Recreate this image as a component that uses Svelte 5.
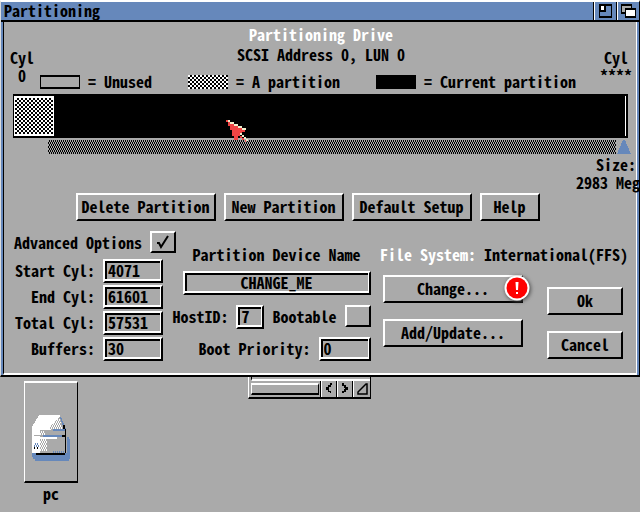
<script>
  const fields = [
    { id: 'start', label: 'Start Cyl:', value: '4071' },
    { id: 'end', label: 'End Cyl:', value: '61601' },
    { id: 'total', label: 'Total Cyl:', value: '57531' },
    { id: 'buffers', label: 'Buffers:', value: '30' }
  ];
  const actions = ['Delete Partition', 'New Partition', 'Default Setup', 'Help'];
  const legend = [
    { kind: 'unused', text: '= Unused' },
    { kind: 'used', text: '= A partition' },
    { kind: 'current', text: '= Current partition' }
  ];
  let advanced = $state(true);
  let bootable = $state(false);
</script>

<main class="screen">
  <section class="window">
    <header class="titlebar">
      <h1>Partitioning</h1>
      <button class="gadget" aria-label="Zoom window">
        <svg width="22" height="18" shape-rendering="crispEdges">
          <path d="M4 2H17V16H4Z" fill="#000" /><path d="M5 4H16V14H5Z" fill="#6688bb" />
          <path d="M5 4H11V10H5Z" fill="#000" /><path d="M6 4H9V8H6Z" fill="#fff" />
        </svg>
      </button>
      <button class="gadget" aria-label="Window to back">
        <svg width="21" height="18" shape-rendering="crispEdges">
          <path d="M3 2H14V12H3Z" fill="#000" /><path d="M4 4H13V10H4Z" fill="#aaa" />
          <path d="M7 6H18V16H7Z" fill="#000" /><path d="M8 8H17V14H8Z" fill="#fff" />
        </svg>
      </button>
    </header>

    <div class="panel">
      <div class="top">
        <p class="cyl">Cyl<br />0</p>
        <div class="middle">
          <h2>Partitioning Drive</h2>
          <p>SCSI Address 0, LUN 0</p>
          <ul class="legend">
            {#each legend as item}
              <li><span class="swatch {item.kind}"></span><span class="text">{item.text}</span></li>
            {/each}
          </ul>
        </div>
        <p class="cyl">Cyl<br />****</p>
      </div>

      <div class="drive"><span class="part"></span><span class="edge"></span></div>
      <div class="slider">
        <span class="track"></span>
        <svg width="14" height="14" shape-rendering="crispEdges"><path d="M6 0H8L14 14H0Z" fill="#6688bb" /></svg>
      </div>
      <p class="size">Size:<br /><span>2983 Meg</span></p>

      <div class="actions">
        {#each actions as action}<button class="btn">{action}</button>{/each}
      </div>

      <div class="form">
        <div class="left">
          <div class="line advanced">
            <label for="advanced">Advanced Options</label>
            <span class="check">
              <input id="advanced" type="checkbox" bind:checked={advanced} />
              {#if advanced}
                <svg width="14" height="14" viewBox="0 0 14 14"><path d="M1 8H3L5 12L12 1" fill="none" stroke="#000" stroke-width="2" /></svg>
              {/if}
            </span>
          </div>
          {#each fields as f}
            <div class="line field">
              <label for={f.id}>{f.label}</label>
              <input class="box" id={f.id} type="text" value={f.value} />
            </div>
          {/each}
        </div>

        <div class="center">
          <label class="name" for="device">Partition Device Name</label>
          <input class="box device" id="device" type="text" value="CHANGE_ME" />
          <div class="line">
            <label for="host">HostID:</label>
            <input class="box host" id="host" type="text" value="7" />
            <label for="bootable">Bootable</label>
            <span class="check"><input id="bootable" type="checkbox" bind:checked={bootable} /></span>
          </div>
          <div class="line">
            <label for="priority">Boot Priority:</label>
            <input class="box priority" id="priority" type="text" value="0" />
          </div>
        </div>

        <div class="right">
          <p class="fs"><span>File System:</span> International(FFS)</p>
          <div class="choices">
            <div class="stack wide">
              <button class="btn change">Change...
                <svg class="badge" width="32" height="32" viewBox="0 0 32 32">
                  <circle cx="16" cy="16" r="12.5" fill="#fff" />
                  <circle cx="16" cy="16" r="10.5" fill="#f00" />
                  <path d="M14.5 10H17.5L17 18H15ZM15 20H17V22H15Z" fill="#fff" />
                </svg>
              </button>
              <button class="btn">Add/Update...</button>
            </div>
            <div class="stack narrow">
              <button class="btn">Ok</button>
              <button class="btn">Cancel</button>
            </div>
          </div>
        </div>
      </div>
    </div>
  </section>

  <div class="desktop">
    <figure>
      <div class="icon">
        <svg width="40" height="48" viewBox="0 0 40 48" shape-rendering="crispEdges">
          <defs>
            <pattern id="fade" width="2" height="4" patternUnits="userSpaceOnUse">
              <path d="M0 0H1V2H0ZM1 2H2V4H1Z" fill="#fff" />
            </pattern>
            <pattern id="shade" width="2" height="4" patternUnits="userSpaceOnUse">
              <path d="M0 0H1V2H0ZM1 2H2V4H1Z" fill="#6688bb" />
            </pattern>
          </defs>
          <path d="M1 38H36V22H38V24H39V44H38V46H4V44H2V42H1Z" fill="#6688bb" />
          <path d="M8 0H29L35 14V38H1V14Z" fill="#aaa" />
          <path d="M8 0H29V2L22 8L18 14H1V12Z" fill="#fff" />
          <path d="M22 4H29L31 14H18Z" fill="url(#fade)" />
          <path d="M29 2H30L35 14H33Z" fill="#6688bb" />
          <path d="M1 14H9V38H1Z" fill="#fff" />
          <path d="M9 16H14V20H9ZM9 24H16V36H9Z" fill="url(#fade)" />
          <path d="M9 14H20V15H9ZM4 22H26V24H4Z" fill="#fff" />
          <path d="M3 20H12V21H3Z" fill="#aaa" />
          <path d="M22 14H34V16H22ZM12 20H31V22H12Z" fill="#6688bb" />
          <path d="M3 28H8V32H3ZM22 36H34V38H22Z" fill="url(#shade)" />
          <path d="M3 32H4V34H3ZM6 32H7V34H6ZM31 20H35V22H31ZM32 10H34V14H32ZM34 14H35V38H34ZM5 38H34V40H5Z" fill="#000" />
        </svg>
      </div>
      <figcaption>pc</figcaption>
    </figure>
    <div class="behind">
      <span class="strip"></span>
      <span class="thumb"></span>
      <button aria-label="Scroll left"><svg width="14" height="16" shape-rendering="crispEdges"><path d="M8 2H10V4H9V6H7V8H6V8H7V10H9V12H10V12H8V11H6V9H4V6H6V4H8Z" /></svg></button>
      <button aria-label="Scroll right"><svg width="14" height="16" shape-rendering="crispEdges"><path d="M4 2H6V4H8V6H10V9H8V11H6V12H4V10H6V8H7V7H6V5H4Z" /></svg></button>
      <button aria-label="Resize"><svg width="16" height="16"><path d="M4 13V11L12 3H13V13Z" fill="none" stroke="#000" stroke-width="1.5" /></svg></button>
    </div>
  </div>

  <svg class="pointer" width="24" height="24" shape-rendering="crispEdges">
    <path d="M1 0H3V2H5V4H9V6H13V8H17V10H20V12H17V14H15V16H17V18H19V20H21V22H20V20H17V18H15V16H13V20H9V16H7V10H5V6H3V2H1Z" fill="#ee4444" />
    <path d="M3 0H5V2H3ZM5 2H9V4H5ZM9 4H13V6H9ZM13 6H17V8H13ZM17 8H21V10H17ZM15 13H17V15H15ZM17 15H19V17H17ZM19 17H21V19H19ZM21 19H23V21H21Z" fill="#eeeecc" />
  </svg>
</main>

<style>
  :global(body) { margin: 0; background: #aaa; overflow: hidden; }
  .screen, button, input {
    font: 700 16px/18px "Noto Sans Mono CJK JP", "Noto Sans Mono CJK SC", "Liberation Mono", monospace;
    font-variant-numeric: slashed-zero;
    color: #000;
  }
  .screen { position: relative; min-height: 100vh; background: #aaa; }
  .screen *, .screen { box-sizing: border-box; }
  h1, h2, p, ul, figure { margin: 0; padding: 0; font-size: 16px; font-weight: 700; }
  button { border-radius: 0; padding: 0; margin: 0; white-space: nowrap; }
  svg { display: block; }

  .window {
    border-top: 2px solid #fff;
    border-left: 1px solid #ddd;
    border-right: 1px solid #000;
    border-bottom: 2px solid #000;
    background: #68b;
    padding: 0 2px;
  }
  .titlebar { display: flex; height: 20px; margin: 0 -2px; border-bottom: 2px solid #000; }
  .titlebar h1 { flex: 1; padding-left: 3px; line-height: 16px; }
  .gadget { background: #68b; border: 0; border-left: 1px solid #fff; box-shadow: -1px 0 #000; }

  .panel {
    background: #aaa;
    border-left: 1px solid #000;
    border-right: 1px solid #fff;
    border-bottom: 2px solid #fff;
    padding: 2px 4px 12px 9px;
  }
  .top { display: flex; justify-content: space-between; height: 70px; }
  .cyl { width: 32px; padding-top: 24px; text-align: center; }
  .cyl:first-child { width: 24px; margin-left: -3px; }
  .middle { flex: 1; text-align: center; line-height: 20px; padding-left: 8px; }
  .middle h2 { color: #fff; line-height: 20px; }
  .legend { display: flex; list-style: none; justify-content: space-between; padding: 8px 24px 0 0; margin-left: -2px; }
  .legend li { display: flex; align-items: center; gap: 8px; line-height: 18px; white-space: nowrap; }
  .text { padding-bottom: 2px; }
  .swatch { width: 40px; height: 14px; background: #000; }
  .swatch.unused { background: none; border: solid #000; border-width: 2px 1px; }
  .swatch.used, .part {
    background: repeating-conic-gradient(#000 0 25%, #fff 0 50%) 0 0 / 4px 4px;
  }
  .drive { display: flex; justify-content: space-between; height: 44px; margin-right: 4px; padding: 2px 2px 2px 1px; background: #000; }
  .part { width: 40px; border: solid #fff; border-width: 2px 1px; }
  .edge { width: 1px; background: #fff; }
  .slider { display: flex; gap: 1px; margin: 2px 0 0 35px; padding-right: 1px; }
  .track { flex: 1; height: 14px; background: repeating-conic-gradient(#000 0 25%, #aaa 0 50%) 0 0 / 2px 4px; }
  .size { margin: 1px -4px 2px 0; text-align: right; position: relative; }
  .size span { margin-right: -4px; }

  .btn {
    height: 28px;
    padding-bottom: 3px;
    background: #aaa;
    border: 2px solid;
    border-color: #fff #000 #000 #fff;
    position: relative;
  }
  .actions { display: flex; justify-content: center; gap: 8px; margin: 1px 30px 0 0; }
  .actions .btn { width: 120px; }
  .actions .btn:first-child { width: 140px; }
  .actions .btn:last-child { width: 60px; }

  .form { display: flex; justify-content: space-between; margin-top: 10px; }
  .line { display: flex; align-items: center; justify-content: flex-end; gap: 8px; height: 24px; white-space: nowrap; }
  .line label { padding-bottom: 3px; }
  .left { display: flex; flex-direction: column; gap: 2px; width: 164px; }
  .advanced { height: 26px; justify-content: flex-start; align-items: flex-start; line-height: 22px; padding-left: 1px; }
  .field { padding-right: 14px; }
  .box {
    width: 60px;
    height: 24px;
    padding: 0 3px 3px;
    background: #aaa;
    border: 2px solid;
    border-color: #fff #000 #000 #fff;
    border-radius: 0;
    box-shadow: inset -1px -2px #fff, inset 2px 2px #000;
    outline: none;
  }
  .check { position: relative; display: block; width: 26px; height: 22px; }
  .line .check { align-self: flex-start; }
  .check input {
    appearance: none;
    display: block;
    width: 26px;
    height: 22px;
    margin: 0;
    border: 2px solid;
    border-color: #fff #000 #000 #fff;
  }
  .check svg { position: absolute; left: 6px; top: 4px; pointer-events: none; }
  .center { display: flex; flex-direction: column; width: 200px; padding-top: 13px; margin-left: -16px; }
  .name { height: 27px; line-height: 20px; text-align: center; padding-left: 12px; }
  .device { width: 188px; align-self: flex-end; text-align: center; margin-bottom: 10px; }
  .center .line + .line { margin-top: 8px; }
  .host { width: 28px; }
  .priority { width: 52px; }
  .right { width: 252px; padding-top: 13px; }
  .fs { line-height: 20px; white-space: nowrap; }
  .fs span { color: #fff; }
  .choices { display: flex; justify-content: space-between; padding: 11px 9px 0 3px; }
  .stack { display: flex; flex-direction: column; gap: 16px; }
  .wide { width: 140px; }
  .narrow { width: 76px; padding-top: 12px; }
  .badge { position: absolute; right: -12px; top: -5px; filter: drop-shadow(1px 1px 2px #444); }

  .desktop { display: flex; align-items: flex-start; }
  figure { width: 54px; margin: 4px 0 0 24px; text-align: center; }
  .icon { height: 102px; padding: 32px 0 0 6px; border: solid; border-width: 2px 1px; border-color: #fff #000 #000 #fff; }
  figcaption { line-height: 20px; }
  .behind {
    display: grid;
    grid-template-columns: 72px 16px 16px 17px;
    grid-template-rows: 4px 16px;
    margin-left: 170px;
    border: solid #000;
    border-width: 0 1px 2px 1px;
    border-left-color: #fff;
  }
  .strip { grid-column: 1 / -1; margin-left: 2px; border-left: 1px solid #000; border-bottom: 2px solid #fff; }
  .thumb { margin: 2px; border: solid; border-width: 2px 1px; border-color: #fff #000 #000 #fff; }
  .behind button { background: #aaa; border: 0; border-left: 1px solid #fff; box-shadow: -1px 0 #000; overflow: hidden; }
  .pointer { position: absolute; left: 225px; top: 120px; pointer-events: none; }
</style>
